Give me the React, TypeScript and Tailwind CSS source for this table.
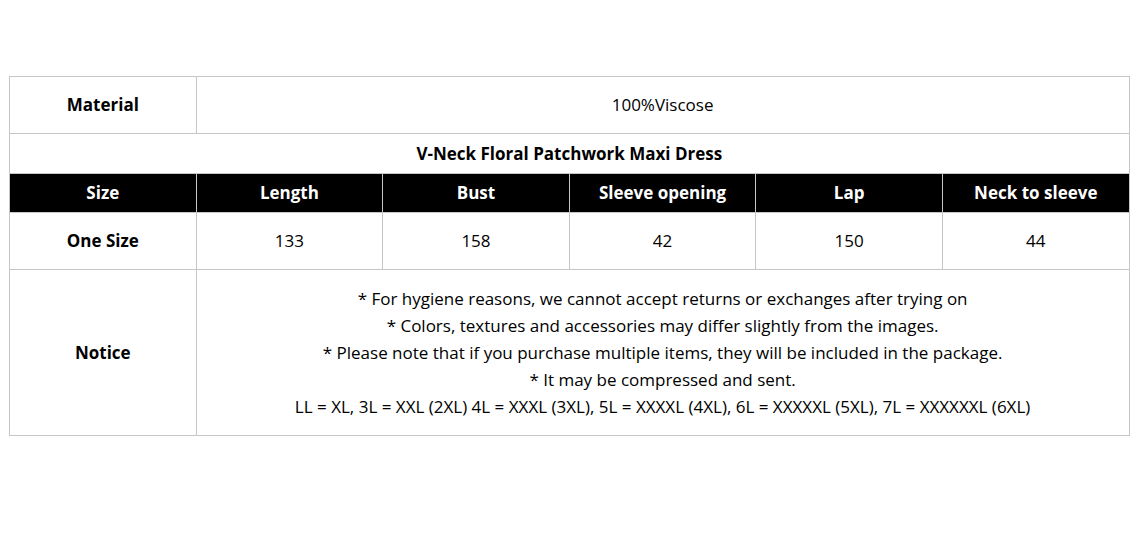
import React from "react";

const headers = ["Size", "Length", "Bust", "Sleeve opening", "Lap", "Neck to sleeve"];
const values = ["133", "158", "42", "150", "44"];
const notices = [
  "* For hygiene reasons, we cannot accept returns or exchanges after trying on",
  "* Colors, textures and accessories may differ slightly from the images.",
  "* Please note that if you purchase multiple items, they will be included in the package.",
  "* It may be compressed and sent.",
  "LL = XL, 3L = XXL (2XL) 4L = XXXL (3XL), 5L = XXXXL (4XL), 6L = XXXXXL (5XL), 7L = XXXXXXL (6XL)",
];

export default function App() {
  return (
    <div
      className="w-[1138px] h-[535px] bg-white pt-[76px] pl-[9px]"
      style={{ fontFamily: '"Open Sans", "Noto Sans", sans-serif' }}
    >
      <table className="w-[1120px] table-fixed border-collapse text-[17px] text-black text-center">
        <colgroup>
          {headers.map((h) => (
            <col key={h} className="w-[186.6px]" />
          ))}
        </colgroup>
        <tbody>
          <tr className="h-[57px]">
            <td className="border border-[#c6c6c6] font-bold p-0">Material</td>
            <td colSpan={5} className="border border-[#c6c6c6] p-0">100%Viscose</td>
          </tr>
          <tr className="h-[40px]">
            <td colSpan={6} className="border border-[#c6c6c6] font-bold p-0">V-Neck Floral Patchwork Maxi Dress</td>
          </tr>
          <tr className="h-[39px] bg-black text-white">
            {headers.map((h) => (
              <td key={h} className="border border-[#c6c6c6] font-bold p-0">{h}</td>
            ))}
          </tr>
          <tr className="h-[57px]">
            <td className="border border-[#c6c6c6] font-bold p-0">One Size</td>
            {values.map((v, i) => (
              <td key={i} className="border border-[#c6c6c6] p-0">{v}</td>
            ))}
          </tr>
          <tr className="h-[166px]">
            <td className="border border-[#c6c6c6] font-bold p-0">Notice</td>
            <td colSpan={5} className="border border-[#c6c6c6] p-0 leading-[27px]">
              {notices.map((n) => (
                <div key={n}>{n}</div>
              ))}
            </td>
          </tr>
        </tbody>
      </table>
    </div>
  );
}
